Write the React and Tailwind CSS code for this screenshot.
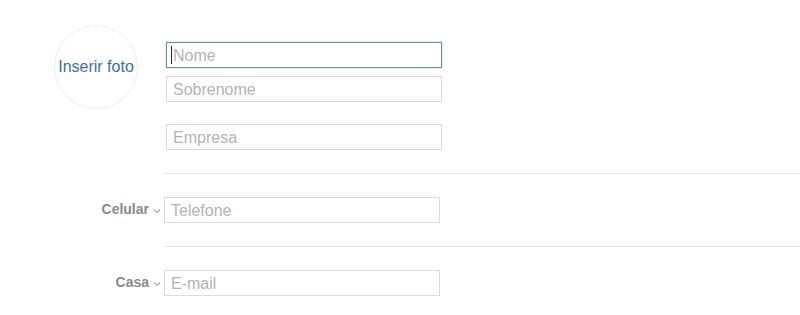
import React from 'react';

const font = { fontFamily: '"Liberation Sans", Arial, sans-serif' };

const Field = ({ placeholder, focused }) => (
  <div
    className={
      'w-[276px] h-[26px] flex items-center px-[6px] bg-white ' +
      (focused
        ? 'border border-[#6d8fa6] shadow-[0_0_2px_rgba(109,143,166,0.5)]'
        : 'border border-[#dadada]')
    }
  >
    {focused && <span className="w-px h-[18px] bg-[#222] -ml-[2px] mr-[1px]"></span>}
    <span className="text-[16px] text-[#b3b3b3] leading-none pt-[2px]">{placeholder}</span>
  </div>
);

const Chevron = () => (
  <svg width="8" height="6" viewBox="0 0 8 6" className="ml-[4px] mr-[3px] mt-[2px]">
    <path d="M1 1.5 L4 4.5 L7 1.5" stroke="#a8a8a8" strokeWidth="1.1" fill="none" />
  </svg>
);

const LabeledRow = ({ label, placeholder }) => (
  <div className="flex items-center h-[25px]">
    <div className="w-[164px] flex items-center justify-end">
      <span className="text-[14px] font-bold text-[#8a8a8a]">{label}</span>
      <Chevron />
    </div>
    <Field placeholder={placeholder} />
  </div>
);

export default function App() {
  return (
    <div className="w-[800px] h-[315px] bg-white overflow-hidden" style={font}>
      <div className="flex pt-[25px]">
        <div className="w-[166px] pl-[54px]">
          <div className="w-[84px] h-[84px] rounded-full border border-[#ececec] flex items-center justify-center">
            <span className="text-[16px] text-[#3b6eaa] whitespace-nowrap">Inserir foto</span>
          </div>
        </div>
        <div className="flex flex-col pt-[17px]">
          <Field placeholder="Nome" focused />
          <div className="mt-[8px]">
            <Field placeholder="Sobrenome" />
          </div>
          <div className="mt-[22px]">
            <Field placeholder="Empresa" />
          </div>
        </div>
      </div>
      <div className="ml-[164px] mt-[23px] border-t border-[#e6e6e6]"></div>
      <div className="mt-[23px]">
        <LabeledRow label="Celular" placeholder="Telefone" />
      </div>
      <div className="ml-[164px] mt-[24px] border-t border-[#e6e6e6]"></div>
      <div className="mt-[23px]">
        <LabeledRow label="Casa" placeholder="E-mail" />
      </div>
    </div>
  );
}
